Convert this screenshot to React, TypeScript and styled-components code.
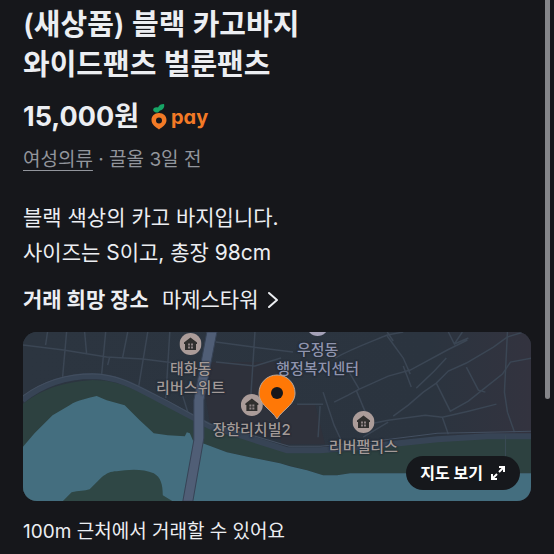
import React from 'react';
import styled, { createGlobalStyle } from 'styled-components';

const GlobalStyle = createGlobalStyle`
  *, *::before, *::after { box-sizing: border-box; }
  html { background: #16171b; scrollbar-width: none; }
  body {
    margin: 0;
    background: #16171b;
    color: #eceef2;
    font-family: Inter, "Noto Sans CJK KR", sans-serif;
    -webkit-font-smoothing: antialiased;
  }
`;

const Page = styled.main`
  display: flex;
  flex-direction: column;
  padding: 5px 23px 8px;
`;

const Title = styled.h1`
  margin: 0;
  font-size: 29px;
  line-height: 40px;
  font-weight: 600;
`;

const PriceRow = styled.div`
  display: flex;
  align-items: center;
  gap: 12px;
  margin-top: 17px;
`;

const Price = styled.strong`
  font-size: 27px;
  line-height: 30px;
  font-weight: 700;
`;

const PayBadge = styled.span`
  display: flex;
  align-items: center;
  gap: 4px;
  color: #f37a26;
  font-size: 20px;
  line-height: 26px;
  font-weight: 700;
  font-feature-settings: 'cv11';
`;

const Meta = styled.p`
  margin: 15px 0 0;
  color: #92959c;
  font-size: 19px;
  line-height: 26px;
`;

const CategoryLink = styled.a`
  color: inherit;
  text-decoration: underline;
  text-decoration-thickness: 1px;
  text-underline-offset: 4px;
`;

const Description = styled.p`
  margin: 27px 0 0;
  font-size: 21px;
  line-height: 35px;
`;

const PlaceRow = styled.section`
  display: flex;
  align-items: center;
  gap: 13px;
  margin-top: 15px;
`;

const PlaceHeading = styled.h2`
  margin: 0;
  font-size: 21px;
  line-height: 30px;
  font-weight: 700;
`;

const PlaceButton = styled.button`
  display: flex;
  align-items: center;
  gap: 9px;
  padding: 0;
  border: 0;
  background: none;
  color: inherit;
  font: inherit;
  font-size: 21px;
  line-height: 30px;
  cursor: pointer;
`;

const MapCard = styled.div`
  position: relative;
  margin-top: 17px;
  aspect-ratio: 3 / 1;
  overflow: hidden;
  border-radius: 14px;
  background: #2b343f;
`;

const MapDrawing = styled.svg`
  display: block;
  width: 100%;
  height: 100%;
`;

const Marker = styled.div<{ $left: number; $top: number; $civic?: boolean }>`
  position: absolute;
  left: ${(p) => p.$left}%;
  top: ${(p) => p.$top}%;
  display: flex;
  flex-direction: column;
  align-items: center;
  gap: 4px;
  transform: translate(-50%, -11px);
  color: ${(p) => (p.$civic ? '#8f94ae' : '#a39a98')};
  font-size: 15px;
  line-height: 19px;
  font-weight: 500;
  text-align: center;
  white-space: pre-line;
  text-shadow: 0 0 2px #1d242e, 0 0 2px #1d242e;

  svg { display: block; }
`;

const MapPin = styled.svg`
  position: absolute;
  left: 50%;
  top: 52%;
  transform: translate(-50%, -100%);
`;

const MapButton = styled.button`
  position: absolute;
  right: 11px;
  bottom: 11px;
  display: flex;
  align-items: center;
  gap: 7px;
  height: 34px;
  padding: 0 14px;
  border: 0;
  border-radius: 17px;
  background: #16181c;
  color: #ffffff;
  font: inherit;
  font-size: 16px;
  line-height: 24px;
  font-weight: 700;
  cursor: pointer;
`;

const Notice = styled.p`
  margin: 18px 0 0;
  font-size: 19px;
  line-height: 26px;
`;

const ScrollThumb = styled.div`
  position: fixed;
  top: 0;
  right: 4px;
  width: 5px;
  height: 72vh;
  border-radius: 0 0 3px 3px;
  background: #85868a;
`;

const CarrotIcon = () => (
  <svg width="16" height="26" viewBox="0 0 16 26" aria-hidden="true">
    <path d="M7 8.500C3 9 1 6 3 4c1-1 3-1 4-.5C8 1 10 0 13 0c1 3-1 6-4 6.500Z" fill="#17a566" />
    <path
      fillRule="evenodd"
      d="M8 9c4.500 0 7.500 3 7.500 7 0 5-4.500 7-7.500 9.500C5 23 .5 21 .5 16c0-4 3-7 7.500-7Zm0 4.500a3 3 0 1 0 0 6 3 3 0 0 0 0-6Z"
      fill="#f37a26"
    />
  </svg>
);

const HouseIcon = () => (
  <svg width="22" height="22" viewBox="0 0 22 22" aria-hidden="true">
    <circle cx="11" cy="11" r="11" fill="#ab9c99" />
    <path d="M11 4.500 17.500 9.500v1.500h-1V17h-11v-6h-1V9.500Z" fill="#302f2e" />
    <path d="M8.500 10.500h2v2h-2Zm3 0h2v2h-2Zm-3 3h2v2h-2Zm3 0h2v2h-2Z" fill="#8d8384" />
  </svg>
);

const CivicIcon = () => (
  <svg width="22" height="22" viewBox="0 0 22 22" aria-hidden="true">
    <circle cx="11" cy="11" r="11" fill="#a5a2b8" />
  </svg>
);

const MapArt = () => (
  <MapDrawing viewBox="0 0 508 169" preserveAspectRatio="xMidYMid slice" aria-hidden="true">
    <defs>
      <linearGradient id="land" x1="0" x2="1" y1="0" y2="0">
        <stop offset="0" stopColor="#2c3540" />
        <stop offset="0.8" stopColor="#2b343f" />
        <stop offset="1" stopColor="#33333f" />
      </linearGradient>
    </defs>
    <path d="M0 0H508V169H0Z" fill="url(#land)" />
    <path d="M177 30H258V108L187 91Z" fill="#2e313b" />
    <path d="M258 72H292L302 112L258 112Z" fill="#2f323c" />
    <g fill="none" stroke="#3b4654" strokeWidth="1.500">
      <path d="M0 13 41 18 84 25 120 27 168 33M83 0 79 42M44 0 40 45M25 0 23 13M62 0 64 22M105 0 100 25M125 0 116 54M147 0 143 66M87 25 85 33" />
      <path d="M193 30 232 34 258 26M232 0 228 62M193 10 230 15 270 20M160 64 165 80" />
      <path d="M312 26C330 16 350 9 364 3L380 0M364 4 380 26 387 42M380 34 388 55M364 0 370 9M425 0 431 12 439 0M431 12 445 6M334 58 365 44 387 38 424 18 444 8" />
      <path d="M370 84 385 73 400 60 413 51 425 39 443 31 470 15 484 5 500 0M413 51 427 79 445 69 460 57 479 42 487 30 508 26M443 35 455 58 462 60M333 58 343 82M336 57 326 40M393 56 411 39 423 26" />
      <path d="M300 60 311 93 318 108M311 70 325 63 336 57M274 72H300M297 74 295 105M345 92 365 88 402 83 419 85 425 102M419 85 445 79 473 72M340 105 365 90M484 0 481 60 484 80 491 100" />
    </g>
    <path
      d="M0 72C20 57 40 50 70 48C100 48 117 61 148 75L187 96 220 105 264 119H297L347 114 414 107 508 103V141L380 141 327 141 314 143H300L284 138 257 131 227 125 204 120 180 111V169H0Z"
      fill="#2d4140"
    />
    <path
      d="M0 68C20 52 44 44 70 44C100 45 118 58 147 73L187 94 220 104 264 118H297L347 114 414 107 464 104H508"
      fill="none"
      stroke="#374455"
      strokeWidth="6"
    />
    <path
      d="M0 64C22 48 44 42 70 42C98 42 118 56 147 70L187 92 222 101 266 114H297L350 109 414 101 508 99"
      fill="none"
      stroke="#434f60"
      strokeWidth="1"
    />
    <path
      d="M0 115 12 101 30 83 47 73C55 68 66 66 74 64L84 68 102 73 117 88 131 101 145 103 162 104 164 100 167 101 170 108 180 111 204 120 227 125 257 131 267 134 284 138 300 143H314L327 141H508V169H0Z"
      fill="#446e7f"
    />
    <path d="M40 169 49 160C56 158 62 159 67 157L79 145C84 141 88 139 94 139C105 137 120 136 131 141C138 145 140 152 140 163L150 169Z" fill="#2f4745" />
    <path d="M184 0H194L181 68V106L170 169H160L171 108V68Z" fill="#505e76" stroke="#374356" strokeWidth="1" />
    <path d="M482 103V141" stroke="#3b4b55" strokeWidth="1" />
  </MapDrawing>
);

const markers = [
  { label: '태화동\n리버스위트', left: 33, top: 7 },
  { label: '우정동\n행정복지센터', left: 58, top: -4, civic: true },
  { label: '장한리치빌2', left: 45, top: 43 },
  { label: '리버팰리스', left: 67, top: 53 },
];

export default function App() {
  return (
    <>
      <GlobalStyle />
      <Page>
        <Title>
          (새상품) 블랙 카고바지
          <br />
          와이드팬츠 벌룬팬츠
        </Title>
        <PriceRow>
          <Price>15,000원</Price>
          <PayBadge>
            <CarrotIcon />
            pay
          </PayBadge>
        </PriceRow>
        <Meta>
          <CategoryLink href="#category">여성의류</CategoryLink> · 끌올 3일 전
        </Meta>
        <Description>
          블랙 색상의 카고 바지입니다.
          <br />
          사이즈는 S이고, 총장 98cm
        </Description>
        <PlaceRow>
          <PlaceHeading>거래 희망 장소</PlaceHeading>
          <PlaceButton type="button">
            마제스타워
            <svg width="12" height="18" viewBox="0 0 12 18" fill="none" aria-hidden="true">
              <path d="M2 2 10 9 2 16" stroke="currentColor" strokeWidth="2" strokeLinecap="round" strokeLinejoin="round" />
            </svg>
          </PlaceButton>
        </PlaceRow>
        <MapCard>
          <MapArt />
          {markers.map((m) => (
            <Marker key={m.label} $left={m.left} $top={m.top} $civic={m.civic}>
              {m.civic ? <CivicIcon /> : <HouseIcon />}
              {m.label}
            </Marker>
          ))}
          <MapPin width="38" height="46" viewBox="0 0 38 46" aria-hidden="true">
            <path
              d="M19 1C9 1 1 9 1 19c0 6 3 10 7 14 4 4 8 7 11 12 3-5 7-8 11-12 4-4 7-8 7-14C37 9 29 1 19 1Z"
              fill="#ff7806"
              stroke="#b9a89c"
              strokeWidth="1"
            />
            <circle cx="19" cy="19" r="6" fill="#16171b" />
          </MapPin>
          <MapButton type="button">
            지도 보기
            <svg width="16" height="16" viewBox="0 0 16 16" fill="none" stroke="currentColor" strokeWidth="2" aria-hidden="true">
              <path d="M9 2h5v5M14 2 9 7M7 14H2V9M2 14 7 9" />
            </svg>
          </MapButton>
        </MapCard>
        <Notice>100m 근처에서 거래할 수 있어요</Notice>
      </Page>
      <ScrollThumb />
    </>
  );
}
